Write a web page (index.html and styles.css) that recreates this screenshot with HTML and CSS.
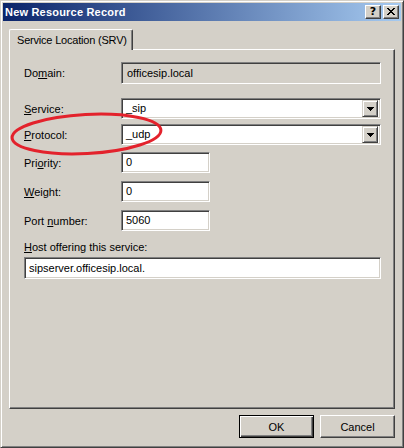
FILE: index.html
```html
<!DOCTYPE html>
<html>
<head>
<meta charset="utf-8">
<link rel="stylesheet" href="styles.css">
</head>
<body>
<div class="window">
  <div class="titlebar">
    <span class="title">New Resource Record</span>
    <div class="tbtns">
      <div class="tbtn"><span class="q">?</span></div>
      <div class="tbtn close">
        <svg width="8" height="7" viewBox="0 0 8 7"><path d="M0 0h2v1h-2zM6 0h2v1h-2zM1 1h2v1h-2zM5 1h2v1h-2zM2 2h4v1h-4zM3 3h2v1h-2zM2 4h4v1h-4zM1 5h2v1h-2zM5 5h2v1h-2zM0 6h2v1h-2zM6 6h2v1h-2z" fill="#000"/></svg>
      </div>
    </div>
  </div>
  <div class="client">
    <div class="tabs"><div class="tab">Service Location (SRV)</div></div>
    <div class="panel">
      <div class="row r-domain">
        <span class="lbl">Do<u>m</u>ain:</span>
        <div class="field wide disabled">officesip.local</div>
      </div>
      <div class="row r-service">
        <span class="lbl"><u>S</u>ervice:</span>
        <div class="field wide combo"><span class="val">_sip</span><span class="drop"><svg width="7" height="4" viewBox="0 0 7 4"><path d="M0 0h7v1h-1v1h-1v1h-1v1h-1v-1h-1v-1h-1v-1h-1z" fill="#000"/></svg></span></div>
      </div>
      <div class="row r-protocol">
        <span class="lbl"><u>P</u>rotocol:</span>
        <div class="field wide combo"><span class="val">_udp</span><span class="drop"><svg width="7" height="4" viewBox="0 0 7 4"><path d="M0 0h7v1h-1v1h-1v1h-1v1h-1v-1h-1v-1h-1v-1h-1z" fill="#000"/></svg></span></div>
      </div>
      <div class="row r-priority">
        <span class="lbl">Pri<u>o</u>rity:</span>
        <div class="field short">0</div>
      </div>
      <div class="row r-weight">
        <span class="lbl"><u>W</u>eight:</span>
        <div class="field short">0</div>
      </div>
      <div class="row r-port">
        <span class="lbl">Port <u>n</u>umber:</span>
        <div class="field short">5060</div>
      </div>
      <div class="host-lbl"><u>H</u>ost offering this service:</div>
      <div class="field host">sipserver.officesip.local.</div>
    </div>
    <div class="buttons">
      <div class="btn default"><span class="btn-in">OK</span></div>
      <div class="btn"><span class="btn-in">Cancel</span></div>
    </div>
  </div>
  <svg class="annot" width="404" height="448" viewBox="0 0 404 448">
    <ellipse cx="85.5" cy="133" rx="74.5" ry="19.5" transform="rotate(-3 85.5 133)" fill="none" stroke="#e3222c" stroke-width="3"/>
  </svg>
</div>
</body>
</html>
```
FILE: styles.css
```css
html, body {
  margin: 0;
  padding: 0;
  background: #d4d0c8;
}
body {
  font-family: "Liberation Sans", Arial, sans-serif;
  font-size: 11px;
  color: #000;
}
.window {
  position: relative;
  width: 404px;
  height: 448px;
  box-sizing: border-box;
  background: #d4d0c8;
  border-style: solid;
  border-width: 1px;
  border-color: #d4d0c8 #404040 #404040 #d4d0c8;
  padding: 2px;
  box-shadow: inset 1px 1px #ffffff, inset -1px -1px #808080;
  display: flex;
  flex-direction: column;
}
.titlebar {
  height: 18px;
  flex: none;
  background: linear-gradient(to right, #0a246a, #a6caf0);
  display: flex;
  align-items: center;
  justify-content: space-between;
  padding: 0 2px 0 2px;
}
.title {
  color: #fff;
  font-weight: bold;
  font-size: 11px;
  font-family: "Liberation Sans", Arial, sans-serif;
  letter-spacing: 0.2px;
}
.tbtns {
  display: flex;
  gap: 2px;
}
.tbtn {
  width: 16px;
  height: 14px;
  box-sizing: border-box;
  background: #d4d0c8;
  border: 1px solid;
  border-color: #ffffff #404040 #404040 #ffffff;
  box-shadow: inset -1px -1px #808080;
  display: flex;
  align-items: center;
  justify-content: center;
}
.q {
  font-family: "DejaVu Sans", sans-serif;
  font-weight: bold;
  font-size: 11px;
  line-height: 11px;
  margin-top: -1px;
}
.close svg {
  margin-top: -1px;
}
.client {
  flex: 1;
  display: flex;
  flex-direction: column;
  padding: 8px 6px 0 6px;
}
.tabs {
  display: flex;
  position: relative;
  z-index: 1;
  margin-bottom: -1px;
}
.tab {
  width: 124px;
  height: 21px;
  box-sizing: border-box;
  background: #d4d0c8;
  border-left: 1px solid #fff;
  border-top: 1px solid #fff;
  border-right: 1px solid #404040;
  border-radius: 2px 2px 0 0;
  box-shadow: inset -1px 0 #808080;
  padding: 3px 0 0 7px;
  line-height: 14px;
  letter-spacing: -0.2px;
}
.panel {
  height: 360px;
  box-sizing: border-box;
  border-style: solid;
  border-width: 1px;
  border-color: #fff #404040 #404040 #fff;
  box-shadow: inset -1px -1px #808080;
  padding: 0 0 0 14px;
  display: flex;
  flex-direction: column;
}
.row {
  display: flex;
  align-items: center;
}
.lbl {
  width: 97px;
  flex: none;
}
.field {
  box-sizing: border-box;
  background: #fff;
  border: 1px solid;
  border-color: #808080 #fff #fff #808080;
  box-shadow: inset 1px 1px #404040, inset -1px -1px #d4d0c8;
  height: 21px;
  line-height: 19px;
  padding-left: 4px;
  white-space: nowrap;
}
.wide { width: 260px; }
.short { width: 89px; }
.disabled {
  background: #d4d0c8;
  height: 22px;
  line-height: 20px;
  padding-left: 5px;
}
.r-domain { margin-top: 12px; }
.r-service { margin-top: 14px; }
.r-protocol { margin-top: 5px; }
.r-priority { margin-top: 7px; }
.r-weight { margin-top: 8px; }
.r-port { margin-top: 8px; }
.combo {
  display: flex;
  align-items: center;
  justify-content: space-between;
  padding-right: 2px;
}
.drop {
  width: 16px;
  height: 17px;
  box-sizing: border-box;
  background: #d4d0c8;
  border: 1px solid;
  border-color: #d4d0c8 #404040 #404040 #d4d0c8;
  box-shadow: inset 1px 1px #fff, inset -1px -1px #808080;
  display: flex;
  align-items: center;
  justify-content: center;
}
.drop svg { display: block; margin-top: 1px; }
.host-lbl {
  margin-top: 9px;
  line-height: 14px;
}
.field.host {
  margin-top: 3px;
  width: 357px;
  height: 22px;
  line-height: 20px;
}
.buttons {
  display: flex;
  justify-content: flex-end;
  gap: 6px;
  margin-top: 6px;
}
.btn {
  width: 75px;
  height: 23px;
  box-sizing: border-box;
  background: #d4d0c8;
  border: 1px solid;
  border-color: #fff #404040 #404040 #fff;
  box-shadow: inset -1px -1px #808080;
  display: flex;
  align-items: center;
  justify-content: center;
}
.btn.default {
  border: 1px solid #000;
  box-shadow: inset 1px 1px #fff, inset -1px -1px #404040, inset -2px -2px #808080;
}
.btn-in { line-height: 14px; }
.annot {
  position: absolute;
  left: 0;
  top: 0;
  pointer-events: none;
}
```
